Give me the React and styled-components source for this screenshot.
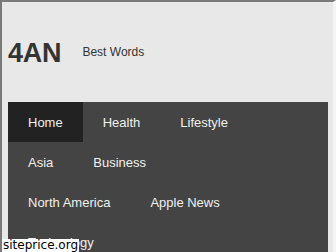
import React from "react";
import styled, { createGlobalStyle } from "styled-components";

const Global = createGlobalStyle`
  html, body { margin: 0; padding: 0; background: #e8e8e8; overflow: hidden; }
  body { font-family: "Liberation Sans", Arial, sans-serif; }
`;

const Page = styled.div`
  position: relative;
  box-sizing: border-box;
  width: 336px;
  height: 252px;
  overflow: hidden;
  background: #e8e8e8;
  border-top: 2px solid #7a7a7a;
  border-left: 2px solid #7a7a7a;
  border-right: 3px solid #f4f4f4;
  padding: 0 5px 0 6px;
`;

const Header = styled.header`
  height: 100px;
  display: flex;
  align-items: center;
  gap: 21px;
`;

const Logo = styled.div`
  font-size: 27px;
  font-weight: bold;
  color: #333;
  letter-spacing: -0.2px;
  padding-top: 2px;
`;

const Tagline = styled.div`
  font-size: 12px;
  color: #333;
`;

const Nav = styled.nav`
  background: #444;
  height: 200px;
`;

const Menu = styled.ul`
  list-style: none;
  margin: 0;
  padding: 0;
  display: flex;
  flex-wrap: wrap;
  max-width: 260px;
`;

const Item = styled.li`
  box-sizing: border-box;
  height: 40px;
  line-height: 40px;
  padding: 1px 20px 0;
  font-size: 13px;
  color: #f0f0f0;
  background: ${(p) => (p.$active ? "#222" : "transparent")};
  white-space: nowrap;
  overflow: hidden;
`;

const Watermark = styled.div`
  position: absolute;
  left: 0;
  bottom: 0;
  background: #fff;
  color: #000;
  font-family: "DejaVu Sans", sans-serif;
  font-size: 12px;
  line-height: 13px;
  padding: 0 1px 0 1px;
`;

const items = ["Home", "Health", "Lifestyle", "Asia", "Business", "North America", "Apple News", "Technology"];

export default function App() {
  return (
    <>
      <Global />
      <Page>
        <Header>
          <Logo>4AN</Logo>
          <Tagline>Best Words</Tagline>
        </Header>
        <Nav>
          <Menu>
            {items.map((it, i) => (
              <Item key={it} $active={i === 0}>{it}</Item>
            ))}
          </Menu>
        </Nav>
        <Watermark>siteprice.org</Watermark>
      </Page>
    </>
  );
}
